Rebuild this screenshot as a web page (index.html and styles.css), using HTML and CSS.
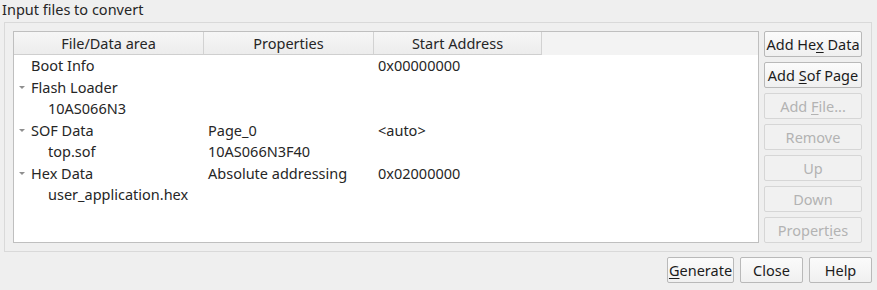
FILE: index.html
```html
<!DOCTYPE html>
<html lang="en">
<head>
    <meta charset="UTF-8">
    <title>Convert Programming File</title>
    <link rel="stylesheet" href="styles.css">
</head>
<body>
    <div class="dialog">
        <div class="group-title">Input files to convert</div>
        <div class="group">
            <div class="tree">
                <div class="tree-header">
                    <div class="hcell col1">File/Data area</div>
                    <div class="hcell col2">Properties</div>
                    <div class="hcell col3">Start Address</div>
                    <div class="hfill"></div>
                </div>
                <div class="row">
                    <div class="cell col1"><span class="arrow none"></span>Boot Info</div>
                    <div class="cell col2"></div>
                    <div class="cell col3">0x00000000</div>
                </div>
                <div class="row">
                    <div class="cell col1"><span class="arrow"></span>Flash Loader</div>
                    <div class="cell col2"></div>
                    <div class="cell col3"></div>
                </div>
                <div class="row">
                    <div class="cell col1 child">10AS066N3</div>
                    <div class="cell col2"></div>
                    <div class="cell col3"></div>
                </div>
                <div class="row">
                    <div class="cell col1"><span class="arrow"></span>SOF Data</div>
                    <div class="cell col2">Page_0</div>
                    <div class="cell col3">&lt;auto&gt;</div>
                </div>
                <div class="row">
                    <div class="cell col1 child">top.sof</div>
                    <div class="cell col2">10AS066N3F40</div>
                    <div class="cell col3"></div>
                </div>
                <div class="row">
                    <div class="cell col1"><span class="arrow"></span>Hex Data</div>
                    <div class="cell col2">Absolute addressing</div>
                    <div class="cell col3">0x02000000</div>
                </div>
                <div class="row">
                    <div class="cell col1 child">user_application.hex</div>
                    <div class="cell col2"></div>
                    <div class="cell col3"></div>
                </div>
            </div>
            <div class="side-buttons">
                <button class="btn">Add He<u>x</u> Data</button>
                <button class="btn">Add <u>S</u>of Page</button>
                <button class="btn" disabled>Add <u>F</u>ile...</button>
                <button class="btn" disabled>Remove</button>
                <button class="btn" disabled>Up</button>
                <button class="btn" disabled>Down</button>
                <button class="btn" disabled>Propert<u>i</u>es</button>
            </div>
        </div>
        <div class="footer">
            <button class="btn btn-generate"><u>G</u>enerate</button>
            <button class="btn btn-close">Close</button>
            <button class="btn btn-help">Help</button>
        </div>
    </div>
</body>
</html>
```

FILE: styles.css
```css
body {
    margin: 0;
    background: #efefef;
    font-family: 'Noto Sans', 'Open Sans', sans-serif;
    font-size: 14.5px;
    color: #262626;
}
.dialog {
    width: 877px;
    height: 290px;
    overflow: hidden;
}
.group-title {
    padding-left: 2px;
    height: 22px;
    line-height: 19px;
}
.group {
    margin-left: 4px;
    width: 858px;
    height: 220px;
    border: 1px solid #d9d9d9;
    display: flex;
    padding: 8px 0 0 8px;
}
.tree {
    width: 744px;
    height: 210px;
    background: #fff;
    border: 1px solid #bfbfbf;
}
.tree-header {
    display: flex;
    height: 23px;
    background: linear-gradient(#f6f6f6, #ececec);
}
.hcell {
    line-height: 22px;
    text-align: center;
    border-right: 1px solid #d2d2d2;
    border-bottom: 1px solid #cfcfcf;
    box-sizing: border-box;
}
.hfill {
    flex: 1;
    background: #f3f3f3;
}
.col1 { width: 190px; }
.col2 { width: 170px; }
.col3 { width: 168px; }
.row {
    display: flex;
    height: 21.5px;
    line-height: 21.5px;
}
.cell {
    padding-left: 4px;
    box-sizing: border-box;
    white-space: nowrap;
}
.cell.col1 {
    display: flex;
    align-items: center;
}
.cell.child { padding-left: 34px; }
.arrow {
    display: inline-block;
    width: 0;
    height: 0;
    border-left: 3px solid transparent;
    border-right: 3px solid transparent;
    border-top: 3px solid #8f8f8f;
    margin: 1px 6px 0 1px;
}
.arrow.none { border-top-color: transparent; }
.side-buttons {
    display: flex;
    flex-direction: column;
    gap: 5px;
    margin-left: 5px;
    width: 98px;
}
.btn {
    height: 26px;
    padding: 0;
    font-family: inherit;
    font-size: 14.5px;
    color: #1c1c1c;
    background: linear-gradient(#fbfbfb, #f0f0f0);
    border: 1px solid #b9b9b9;
    border-radius: 2px;
}
.btn u { text-underline-offset: 2px; }
.btn:disabled {
    color: #b3b3b3;
    border-color: #d6d6d6;
    background: #f1f1f1;
}
.footer {
    display: flex;
    justify-content: flex-end;
    gap: 6px;
    padding-right: 5px;
    margin-top: 5px;
}
.btn-generate { width: 67px; }
.btn-close { width: 63px; }
.btn-help { width: 63px; }
```
